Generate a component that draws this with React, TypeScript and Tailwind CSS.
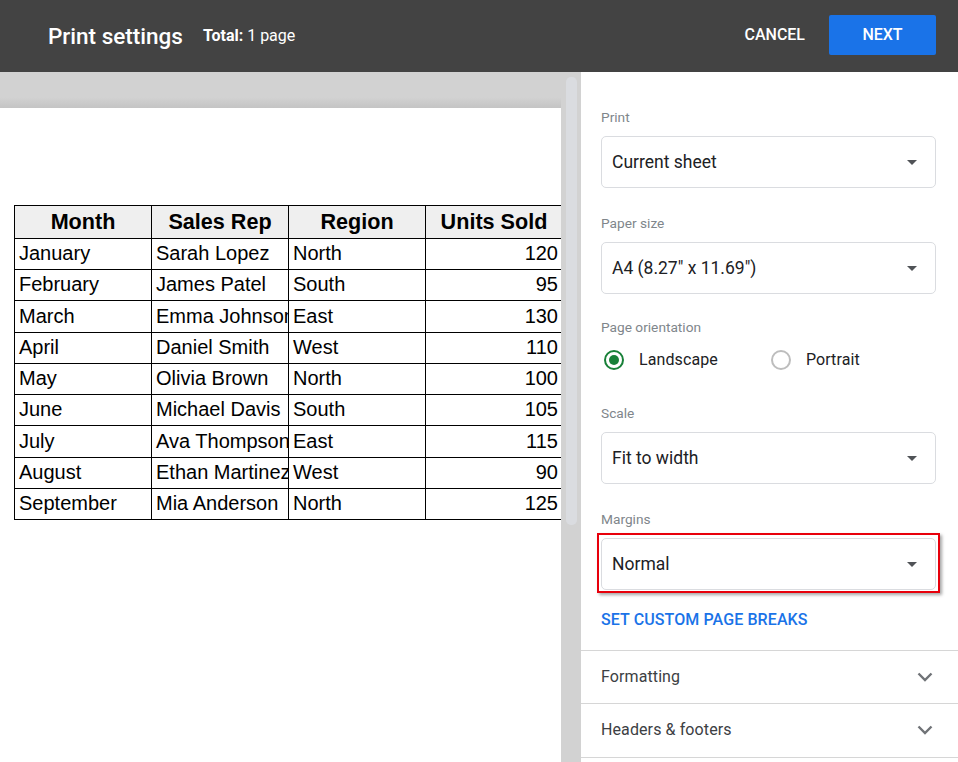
import React from 'react';

const rows = [
  ['January', 'Sarah Lopez', 'North', '120'],
  ['February', 'James Patel', 'South', '95'],
  ['March', 'Emma Johnson', 'East', '130'],
  ['April', 'Daniel Smith', 'West', '110'],
  ['May', 'Olivia Brown', 'North', '100'],
  ['June', 'Michael Davis', 'South', '105'],
  ['July', 'Ava Thompson', 'East', '115'],
  ['August', 'Ethan Martinez', 'West', '90'],
  ['September', 'Mia Anderson', 'North', '125'],
];

const heights = ['h-[31px]', 'h-[31px]', 'h-[32px]', 'h-[31px]', 'h-[31px]', 'h-[31px]', 'h-[32px]', 'h-[31px]', 'h-[31px]'];

const Caret = () => (
  <svg width="10" height="5" viewBox="0 0 10 5" className="shrink-0">
    <path d="M0 0h10L5 5z" fill="#505357" />
  </svg>
);

const Chevron = () => (
  <svg width="16" height="10" viewBox="0 0 16 10" className="shrink-0">
    <path d="M1.5 1.5 8 8l6.5-6.5" fill="none" stroke="#707377" strokeWidth="2.4" />
  </svg>
);

const Select = ({ value }: { value: string }) => (
  <div className="flex h-[52px] items-center justify-between rounded-[5px] border border-[#dadce0] bg-white pl-[10px] pr-[18px] text-[17.5px] text-[#202124]">
    <span className="pt-[1px]">{value}</span>
    <Caret />
  </div>
);

const Label = ({ children, className }: { children: React.ReactNode; className: string }) => (
  <div className={`text-[13.7px] leading-[18px] text-[#80868b] ${className}`}>{children}</div>
);

const Section = ({ title, className }: { title: string; className: string }) => (
  <div className={`flex items-center justify-between border-b border-[#d6d6d6] pl-[20px] pr-[25px] text-[16px] tracking-[0.1px] text-[#3c4043] ${className}`}>
    <span>{title}</span>
    <Chevron />
  </div>
);

export default function App() {
  return (
    <div className="h-[762px] w-[958px] overflow-hidden bg-white font-['Roboto',sans-serif]">
      {/* Header */}
      <div className="flex h-[72px] items-center bg-[#434343] pl-[48px] pr-[22px] text-white">
        <h1 className="text-[22.5px] font-medium leading-none">Print settings</h1>
        <div className="ml-[20px] text-[16px]">
          <span className="font-bold">Total:</span> 1 page
        </div>
        <button className="mb-[2px] ml-auto text-[16px] font-medium">CANCEL</button>
        <button className="mb-[2px] ml-[24px] h-[40px] w-[107px] rounded-[2px] bg-[#1a73e8] text-[16px] font-medium">NEXT</button>
      </div>

      <div className="flex h-[690px]">
        {/* Preview */}
        <div className="flex w-[561px] flex-col">
          <div className="h-[36px] bg-gradient-to-b from-[#d2d2d2] from-70% to-[#c4c4c4]"></div>
          <div className="flex-1 overflow-hidden bg-white pl-[14px] pt-[97px] font-['Liberation_Sans',sans-serif] text-black">
            <table className="w-[549px] table-fixed border-collapse text-[20px] leading-[24px]">
              <thead>
                <tr className="h-[33px] bg-[#efefef] text-[21.6px] font-bold">
                  <th className="w-[137px] border border-black p-0 text-center">Month</th>
                  <th className="w-[137px] border border-black p-0 text-center">Sales Rep</th>
                  <th className="w-[137px] border border-black p-0 text-center">Region</th>
                  <th className="border border-black p-0 text-center">Units Sold</th>
                </tr>
              </thead>
              <tbody>
                {rows.map((row, i) => (
                  <tr key={row[0]} className={heights[i]}>
                    <td className="border border-black p-0 pb-[2px] pl-[4px]">{row[0]}</td>
                    <td className="overflow-hidden whitespace-nowrap border border-black p-0 pb-[2px] pl-[4px]">{row[1]}</td>
                    <td className="border border-black p-0 pb-[2px] pl-[4px]">{row[2]}</td>
                    <td className="border border-black p-0 pb-[2px] pr-[4px] text-right">{row[3]}</td>
                  </tr>
                ))}
              </tbody>
            </table>
          </div>
        </div>

        {/* Scroll gutter */}
        <div className="w-[20px] bg-[#d2d2d2] pl-[5px] pt-[5px]">
          <div className="h-[448px] w-[11px] rounded-[5px] bg-[#dadce0]"></div>
        </div>

        {/* Settings panel */}
        <div className="w-[377px] bg-white">
          <div className="px-[20px] pr-[22px]">
            <Label className="pt-[36px] pb-[10px]">Print</Label>
            <Select value="Current sheet" />
            <Label className="pt-[26px] pb-[10px]">Paper size</Label>
            <Select value='A4 (8.27" x 11.69")' />
            <Label className="pt-[24px] pb-[8px]">Page orientation</Label>
            <div className="flex h-[32px] items-center pl-[3px] text-[16px] tracking-[0.1px] text-[#202124]">
              <span className="flex h-[20px] w-[20px] items-center justify-center rounded-full border-2 border-[#188038]">
                <span className="h-[10px] w-[10px] rounded-full bg-[#188038]"></span>
              </span>
              <span className="ml-[15px]">Landscape</span>
              <span className="ml-[53px] h-[20px] w-[20px] rounded-full border-2 border-[#bdbdbd]"></span>
              <span className="ml-[15px]">Portrait</span>
            </div>
            <Label className="pt-[28px] pb-[10px]">Scale</Label>
            <Select value="Fit to width" />
            <Label className="pt-[26px] pb-[10px]">Margins</Label>
            <div className="relative">
              <Select value="Normal" />
              <div className="absolute -bottom-[3px] -left-[4px] -right-[4px] -top-[5px] border-2 border-[#e8000b] shadow-[2px_2px_3px_rgba(0,0,0,0.35)]"></div>
            </div>
            <div className="pt-[21px] text-[16px] font-medium leading-[18px] tracking-[0.1px] text-[#1a73e8]">SET CUSTOM PAGE BREAKS</div>
          </div>
          <div className="mt-[21px] border-b border-[#d6d6d6]"></div>
          <Section title="Formatting" className="h-[53px]" />
          <Section title="Headers & footers" className="h-[54px] pb-[2px]" />
        </div>
      </div>
    </div>
  );
}
